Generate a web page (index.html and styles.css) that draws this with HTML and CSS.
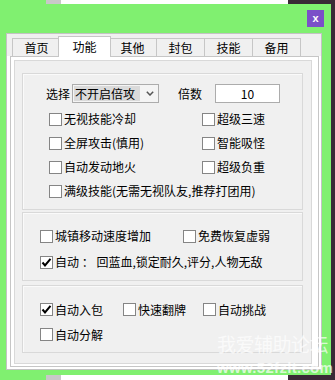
FILE: index.html
```html
<!DOCTYPE html>
<html>
<head>
<meta charset="utf-8">
<link rel="stylesheet" href="styles.css">
</head>
<body>
<div class="win">
  <div class="titlebar"><div class="close">x</div></div>
  <div class="frame">
    <div class="tabs">
      <div class="tab">首页</div>
      <div class="tab active">功能</div>
      <div class="tab">其他</div>
      <div class="tab">封包</div>
      <div class="tab">技能</div>
      <div class="tab">备用</div>
    </div>
    <div class="panel">
      <div class="inner">
        <div class="group g1">
          <div class="selrow">
            <span class="lbl">选择</span>
            <div class="select"><span class="sel-text">不开启倍攻</span>
              <svg class="arrow" width="8" height="5" viewBox="0 0 8 5"><path d="M0.8 0.8 L4 4 L7.2 0.8" fill="none" stroke="#555" stroke-width="1.5"/></svg>
            </div>
            <span class="lbl lbl2">倍数</span>
            <div class="input">10</div>
          </div>
          <div class="grid grid1">
            <div class="cb"><span class="box"></span>无视技能冷却</div>
            <div class="cb"><span class="box"></span>超级三速</div>
            <div class="cb"><span class="box"></span>全屏攻击(慎用)</div>
            <div class="cb"><span class="box"></span>智能吸怪</div>
            <div class="cb"><span class="box"></span>自动发动地火</div>
            <div class="cb"><span class="box"></span>超级负重</div>
            <div class="cb full"><span class="box"></span>满级技能(无需无视队友,推荐打团用)</div>
          </div>
        </div>
        <div class="group g2">
          <div class="grid grid2">
            <div class="cb"><span class="box"></span>城镇移动速度增加</div>
            <div class="cb"><span class="box"></span>免费恢复虚弱</div>
            <div class="cb full"><span class="box checked"><svg width="11" height="11" viewBox="0 0 11 11"><path d="M1.5 5.5 L4 8.5 L9.5 1.8" fill="none" stroke="#000" stroke-width="2"/></svg></span>自动&nbsp;：&nbsp;回蓝血,锁定耐久,评分,人物无敌</div>
          </div>
        </div>
        <div class="group g3">
          <div class="grid grid3">
            <div class="cb"><span class="box checked"><svg width="11" height="11" viewBox="0 0 11 11"><path d="M1.5 5.5 L4 8.5 L9.5 1.8" fill="none" stroke="#000" stroke-width="2"/></svg></span>自动入包</div>
            <div class="cb"><span class="box"></span>快速翻牌</div>
            <div class="cb"><span class="box"></span>自动挑战</div>
            <div class="cb"><span class="box"></span>自动分解</div>
          </div>
        </div>
      </div>
    </div>
  </div>
</div>
<div class="wm">
  <div class="wm-cn">我爱辅助论坛</div>
  <div class="wm-url">www.52fzlt.com</div>
</div>
</body>
</html>
```
FILE: styles.css
```css
html, body {
  margin: 0;
  padding: 0;
}
body {
  width: 335px;
  height: 380px;
  overflow: hidden;
  position: relative;
  background: linear-gradient(to right, #80f070 0 46px, #c8c8c8 46px 61px, #ffffff 61px 288px, #3a2936 288px);
  font-family: "Noto Sans CJK SC", "Noto Sans", sans-serif;
  font-size: 12px;
  color: #000;
}
.win {
  margin-top: 4px;
  width: 331px;
  height: 371px;
  background: #80f070;
  display: flex;
  flex-direction: column;
}
.titlebar {
  height: 29px;
  display: flex;
  justify-content: flex-end;
  align-items: flex-start;
}
.close {
  margin: 6px 7px 0 0;
  width: 17px;
  height: 17px;
  background: #7b50c8;
  color: #fff;
  font: bold 11px "Liberation Sans", sans-serif;
  display: flex;
  align-items: center;
  justify-content: center;
  line-height: 1;
}
.frame {
  margin-left: 6px;
  width: 316px;
  height: 337px;
  box-sizing: border-box;
  border: 1px solid #c3c3c3;
  background: #fff;
  padding: 0 2px 2px 3px;
  display: flex;
  flex-direction: column;
}
.tabs {
  margin: 0 -2px 0 -3px;
  height: 22px;
  flex: none;
  background: #f0f0f0;
  display: flex;
  align-items: flex-end;
  padding-left: 5px;
}
.tab {
  width: 49px;
  height: 18px;
  box-sizing: border-box;
  margin-right: -1px;
  border: 1px solid #c6c6c6;
  border-bottom: none;
  background: #f0f0f0;
  display: flex;
  align-items: center;
  justify-content: center;
  line-height: 1;
  padding-top: 1px;
}
.tab.active {
  width: 53px;
  height: 21px;
  margin: 0 -3px -1px -2px;
  background: #fff;
  position: relative;
  z-index: 2;
  padding-top: 0;
  padding-bottom: 1px;
}
.panel {
  height: 311px;
  box-sizing: border-box;
  border: 1px solid #c6c6c6;
  background: #fff;
  padding: 3px 6px 2px 3px;
}
.inner {
  height: 304px;
  box-sizing: border-box;
  border: 1px solid #d9d9d9;
  background: #f0f0f0;
  padding: 12px 8px 10px 7px;
}
.group {
  box-sizing: border-box;
  border: 1px solid #d9d9d9;
  box-shadow: inset 1px 1px 0 #fafafa;
}
.g1 {
  height: 137px;
  margin-bottom: 2px;
  padding-top: 10px;
}
.g2 {
  height: 69px;
  margin-bottom: 4px;
  padding: 10px 0 0 17px;
}
.g3 {
  height: 68px;
  padding: 11px 0 0 17px;
}
.selrow {
  display: flex;
  align-items: center;
  height: 19px;
  padding-left: 23px;
}
.lbl {
  width: 24px;
  margin-right: 2px;
  white-space: nowrap;
}
.lbl2 {
  margin-left: 19px;
  margin-right: 13px;
}
.select {
  width: 87px;
  height: 19px;
  box-sizing: border-box;
  border: 1px solid #acacac;
  background: #f4f4f4;
  display: flex;
  align-items: center;
  padding-left: 1px;
}
.sel-text {
  width: 65px;
  height: 15px;
  line-height: 15px;
  background: #dadada;
  padding-left: 1px;
  white-space: nowrap;
}
.arrow {
  margin-left: auto;
  margin-right: 4px;
}
.input {
  width: 65px;
  height: 19px;
  box-sizing: border-box;
  border: 1px solid #acacac;
  background: #fff;
  text-align: center;
  line-height: 17px;
}
.grid {
  display: grid;
  align-items: center;
}
.grid1 {
  margin-top: 4px;
  padding-left: 26px;
  grid-template-columns: 153px auto;
  grid-auto-rows: 24px;
}
.grid2 {
  grid-template-columns: 143px auto;
  grid-auto-rows: 26px;
}
.grid3 {
  grid-template-columns: 83px 80px auto;
  grid-auto-rows: 25px;
}
.full {
  grid-column: 1 / -1;
}
.cb {
  display: flex;
  align-items: center;
  gap: 2px;
  white-space: nowrap;
  line-height: 1;
}
.box {
  width: 13px;
  height: 13px;
  box-sizing: border-box;
  border: 1px solid #858585;
  background: #fff;
  flex: none;
  display: flex;
  align-items: center;
  justify-content: center;
}
.wm {
  position: absolute;
  left: 217px;
  top: 334px;
  color: rgba(255, 255, 255, 0.7);
  line-height: 1;
}
.wm-cn {
  font-size: 19px;
  letter-spacing: -0.5px;
}
.wm-url {
  margin-top: 6px;
  font: bold 15px "Liberation Sans", sans-serif;
  letter-spacing: 0.3px;
}
```
